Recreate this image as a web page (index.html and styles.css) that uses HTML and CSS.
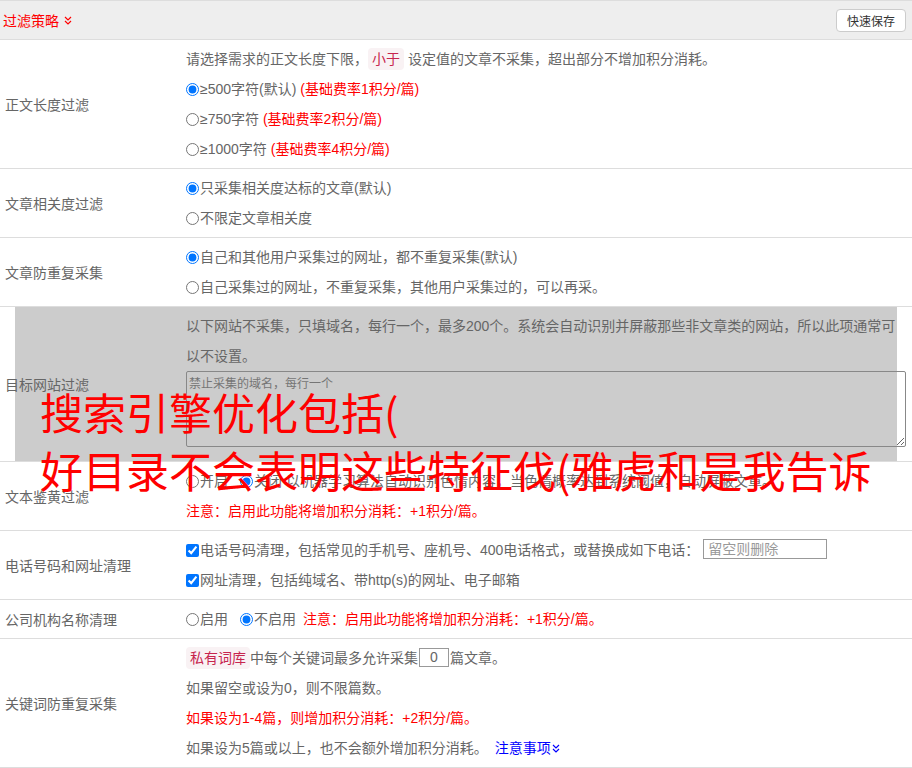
FILE: index.html
```html
<!DOCTYPE html>
<html lang="zh-CN">
<head>
    <meta charset="UTF-8">
    <meta name="viewport" content="width=device-width, initial-scale=1.0">
    <title>过滤策略</title>
    <link rel="stylesheet" href="styles.css">
</head>
<body>
    <div class="panel">
        <div class="panel-head">
            <span class="panel-title">过滤策略
                <svg class="chev" width="8" height="9" viewBox="0 0 8 9"><path d="M1 1l3 3 3-3M1 5l3 3 3-3" fill="none" stroke="#f00" stroke-width="1.2"/></svg>
            </span>
            <button type="button" class="btn-save">快速保存</button>
        </div>

        <div class="row">
            <div class="label">正文长度过滤</div>
            <div class="field">
                <div class="line">请选择需求的正文长度下限，<code class="tag">小于</code> 设定值的文章不采集，超出部分不增加积分消耗。</div>
                <div class="line"><label><input type="radio" name="len" checked>≥500字符(默认)</label> <span class="warn">(基础费率1积分/篇)</span></div>
                <div class="line"><label><input type="radio" name="len">≥750字符</label> <span class="warn">(基础费率2积分/篇)</span></div>
                <div class="line"><label><input type="radio" name="len">≥1000字符</label> <span class="warn">(基础费率4积分/篇)</span></div>
            </div>
        </div>

        <div class="row">
            <div class="label">文章相关度过滤</div>
            <div class="field">
                <div class="line"><label><input type="radio" name="rel" checked>只采集相关度达标的文章(默认)</label></div>
                <div class="line"><label><input type="radio" name="rel">不限定文章相关度</label></div>
            </div>
        </div>

        <div class="row">
            <div class="label">文章防重复采集</div>
            <div class="field">
                <div class="line"><label><input type="radio" name="dup" checked>自己和其他用户采集过的网址，都不重复采集(默认)</label></div>
                <div class="line"><label><input type="radio" name="dup">自己采集过的网址，不重复采集，其他用户采集过的，可以再采。</label></div>
            </div>
        </div>

        <div class="row row-shaded">
            <div class="label">目标网站过滤</div>
            <div class="field">
                <div class="line">以下网站不采集，只填域名，每行一个，最多200个。系统会自动识别并屏蔽那些非文章类的网站，所以此项通常可以不设置。</div>
                <textarea class="domains" placeholder="禁止采集的域名，每行一个"></textarea>
            </div>
        </div>

        <div class="row">
            <div class="label">文本鉴黄过滤</div>
            <div class="field">
                <div class="line"><label class="opt"><input type="radio" name="porn">开启</label><label><input type="radio" name="porn" checked>关闭</label> 以机器学习算法自动识别色情内容，当色情概率达到系统阈值，自动屏蔽文章。</div>
                <div class="line warn">注意：启用此功能将增加积分消耗：+1积分/篇。</div>
            </div>
        </div>

        <div class="row">
            <div class="label">电话号码和网址清理</div>
            <div class="field">
                <div class="line"><label><input type="checkbox" checked>电话号码清理，包括常见的手机号、座机号、400电话格式，或替换成如下电话：</label> <input type="text" class="phone" placeholder="留空则删除"></div>
                <div class="line"><label><input type="checkbox" checked>网址清理，包括纯域名、带http(s)的网址、电子邮箱</label></div>
            </div>
        </div>

        <div class="row">
            <div class="label">公司机构名称清理</div>
            <div class="field">
                <div class="line"><label class="opt"><input type="radio" name="org">启用</label><label><input type="radio" name="org" checked>不启用</label> <span class="warn note">注意：启用此功能将增加积分消耗：+1积分/篇。</span></div>
            </div>
        </div>

        <div class="row">
            <div class="label">关键词防重复采集</div>
            <div class="field">
                <div class="line"><code class="tag">私有词库</code>中每个关键词最多允许采集<input type="text" class="count" value="0">篇文章。</div>
                <div class="line">如果留空或设为0，则不限篇数。</div>
                <div class="line warn">如果设为1-4篇，则增加积分消耗：+2积分/篇。</div>
                <div class="line">如果设为5篇或以上，也不会额外增加积分消耗。 <a href="#" class="more">注意事项<svg class="chev" width="8" height="9" viewBox="0 0 8 9"><path d="M1 1l3 3 3-3M1 5l3 3 3-3" fill="none" stroke="#00f" stroke-width="1.2"/></svg></a></div>
            </div>
        </div>
    </div>

    <div class="float-ad">搜索引擎优化包括(<br>好目录不会表明这些特征伐(雅虎和是我告诉</div>
</body>
</html>
```

FILE: styles.css
```css
* {
    margin: 0;
    padding: 0;
    box-sizing: border-box;
}

body {
    font-family: "Liberation Sans", "Noto Sans CJK SC", sans-serif;
    font-size: 14px;
    color: #666;
    background: #fff;
    position: relative;
}

.panel-head {
    height: 40px;
    display: flex;
    align-items: center;
    justify-content: space-between;
    padding: 0 6px 0 3px;
    background: #eee;
    border-top: 1px solid #ddd;
    border-bottom: 1px solid #ddd;
}

.panel-title {
    color: #f00;
    font-size: 14px;
    display: flex;
    align-items: center;
    gap: 5px;
}

.btn-save {
    width: 70px;
    height: 23px;
    background: #fff;
    border: 1px solid #ccc;
    border-radius: 4px;
    font-family: inherit;
    font-size: 12px;
    color: #333;
}

.row {
    display: grid;
    grid-template-columns: 186px 1fr;
    border-bottom: 1px solid #ddd;
    position: relative;
}

.row:first-of-type .field {
    padding-bottom: 5px;
}

.label {
    display: flex;
    align-items: center;
    padding-left: 5px;
    position: relative;
    z-index: 1;
}

.field {
    padding: 4px 6px 4px 0;
    position: relative;
    z-index: 1;
}

.line {
    line-height: 30px;
}

.warn {
    color: #f00;
}

.note {
    margin-left: 3px;
}

.opt {
    margin-right: 12px;
}

input[type="radio"],
input[type="checkbox"] {
    width: 13px;
    height: 13px;
    margin: 0 1px 0 0;
    vertical-align: -2px;
}

.tag {
    font-family: inherit;
    font-size: 14px;
    padding: 3px 4px;
    color: #c7254e;
    background: #f9f2f4;
    border-radius: 4px;
}

.row-shaded::before {
    content: "";
    position: absolute;
    top: 0;
    bottom: 0;
    left: 15px;
    right: 15px;
    background: #ccc;
}

.domains {
    display: block;
    width: 100%;
    height: 76px;
    margin-bottom: 10px;
    padding: 2px;
    border: 1px solid #888;
    border-radius: 2px;
    background: transparent;
    font-family: inherit;
    font-size: 12px;
    resize: vertical;
}

.domains::placeholder {
    color: #757575;
}

.phone {
    width: 124px;
    height: 20px;
    padding: 0 4px;
    border: 1px solid #999;
    font-family: inherit;
    font-size: 14px;
    vertical-align: 1px;
}

.phone::placeholder {
    color: #999;
}

.count {
    width: 30px;
    height: 19px;
    margin: 0 1px;
    border: 1px solid #999;
    text-align: center;
    font-family: inherit;
    font-size: 14px;
    color: #666;
    vertical-align: 1px;
}

.more {
    color: #00f;
    text-decoration: none;
    margin-left: 3px;
}

.more .chev {
    margin-left: 1px;
    vertical-align: 0;
}

.float-ad {
    position: absolute;
    top: 382px;
    left: 40px;
    font-family: "Noto Sans CJK SC", sans-serif;
    font-size: 43px;
    line-height: 58px;
    color: #f00;
    z-index: 5;
    white-space: nowrap;
}
```
